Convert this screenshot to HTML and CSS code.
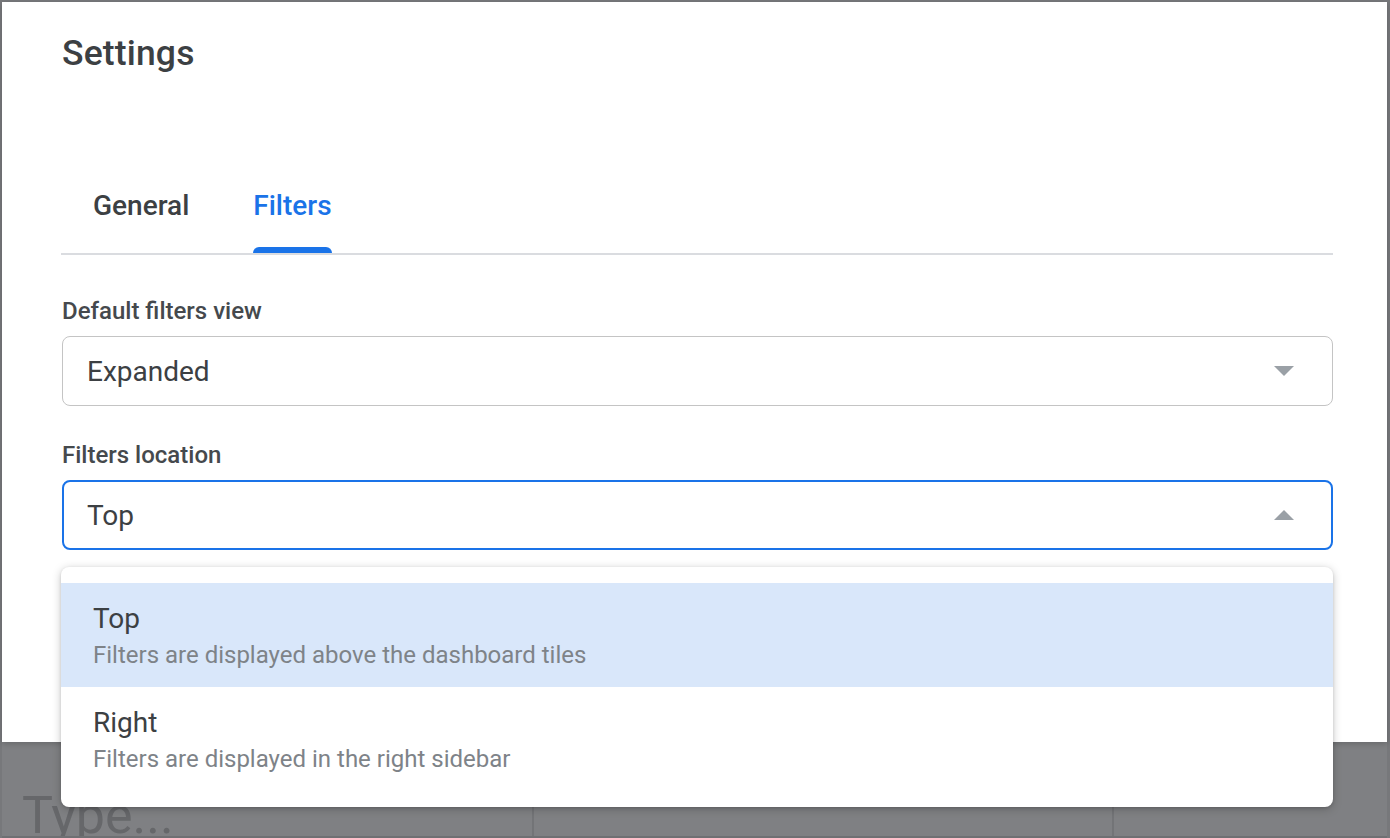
FILE: index.html
```html
<!DOCTYPE html>
<html lang="en">
<head>
<meta charset="utf-8">
<title>Settings</title>
<link rel="stylesheet" href="styles.css">
</head>
<body>
<div class="screen">
  <div class="dialog">
    <h1 class="title">Settings</h1>
    <div class="tabs">
      <div class="tab"><span class="tab-label">General</span></div>
      <div class="tab active"><span class="tab-label">Filters<span class="indicator"></span></span></div>
    </div>

    <div class="field field-first">
      <div class="label">Default filters view</div>
      <div class="select">
        <span class="value">Expanded</span>
        <svg class="arrow" width="20" height="10" viewBox="0 0 20 10"><path d="M0 0 L20 0 L10 10 Z" fill="#9aa0a6"/></svg>
      </div>
    </div>

    <div class="field">
      <div class="label">Filters location</div>
      <div class="select-wrap">
        <div class="select focused">
          <span class="value">Top</span>
          <svg class="arrow" width="20" height="10" viewBox="0 0 20 10"><path d="M0 10 L20 10 L10 0 Z" fill="#9aa0a6"/></svg>
        </div>
        <div class="menu">
          <div class="option selected">
            <div class="opt-title">Top</div>
            <div class="opt-sub">Filters are displayed above the dashboard tiles</div>
          </div>
          <div class="option">
            <div class="opt-title">Right</div>
            <div class="opt-sub">Filters are displayed in the right sidebar</div>
          </div>
        </div>
      </div>
    </div>
  </div>
  <div class="page-row">
    <div class="cell cell-input">Type...</div>
    <div class="cell"></div>
    <div class="cell"></div>
  </div>
</div>
</body>
</html>
```
FILE: styles.css
```css
* { box-sizing: border-box; }
html, body { margin: 0; padding: 0; }
body {
  width: 1390px;
  height: 838px;
  overflow: hidden;
  background: #77787b;
  font-family: Roboto, "Liberation Sans", Arial, sans-serif;
}
.screen {
  padding: 2px 3px 0 2px;
  display: flex;
  flex-direction: column;
  height: 838px;
}
.dialog {
  position: relative;
  z-index: 2;
  background: #ffffff;
  height: 740px;
  padding: 31px 54px 0 60px;
  box-shadow: 0 2px 6px rgba(0,0,0,0.18);
}
.title {
  margin: 0;
  font-size: 35.5px;
  line-height: 40px;
  font-weight: 500;
  color: #3c4043;
  letter-spacing: 0.15px;
}
.tabs {
  margin-top: 116px;
  display: flex;
  border-bottom: 2px solid #dadce0;
  margin-left: -1px;
}
.tab {
  padding: 1px 32px 0 32px;
  font-size: 28px;
  line-height: 32px;
  font-weight: 500;
  color: #3c4043;
  height: 64px;
}
.tab.active { color: #1a73e8; }
.tab-label {
  position: relative;
  display: inline-block;
}
.indicator {
  position: absolute;
  left: 0;
  right: 0;
  top: 57px;
  height: 6px;
  background: #1a73e8;
  border-radius: 6px 6px 0 0;
}
.field { margin-top: 35px; }
.field-first { margin-top: 42px; }
.label {
  font-size: 24px;
  line-height: 28px;
  font-weight: 500;
  color: #45494d;
  margin-bottom: 11px;
}
.select-wrap { position: relative; }
.select {
  height: 70px;
  border: 1.5px solid #c4c4c4;
  border-radius: 8px;
  display: flex;
  align-items: center;
  justify-content: space-between;
  padding: 2px 38px 0 24px;
}
.select.focused {
  border: 2.5px solid #1a73e8;
  padding-left: 23px;
  padding-right: 37px;
}
.value {
  font-size: 28px;
  line-height: 32px;
  color: #3c4043;
}
.arrow { display: block; margin-top: -2px; }
.menu {
  position: absolute;
  left: -1px;
  right: 0;
  top: 87px;
  background: #ffffff;
  border-radius: 8px;
  padding: 16px 0;
  box-shadow: 0 2px 10px rgba(0,0,0,0.22), 0 1px 3px rgba(0,0,0,0.12);
}
.option {
  height: 104px;
  padding: 19px 32px 0 32px;
}
.option.selected { background: #d9e7fa; }
.opt-title {
  font-size: 28px;
  line-height: 34px;
  color: #3c4043;
}
.opt-sub {
  margin-top: 5px;
  font-size: 24px;
  line-height: 28px;
  color: #7e8388;
}
.page-row {
  flex: 1;
  display: grid;
  grid-template-columns: 530px 580px 1fr;
  background: #7f8083;
  border-bottom: 2px solid #6f7073;
  overflow: hidden;
}
.cell {
  border-left: 2px solid #737477;
}
.cell:first-child { border-left: none; }
.cell-input {
  padding: 48px 0 0 20px;
  font-size: 52px;
  line-height: 52px;
  color: #66676a;
  overflow: hidden;
}
```
